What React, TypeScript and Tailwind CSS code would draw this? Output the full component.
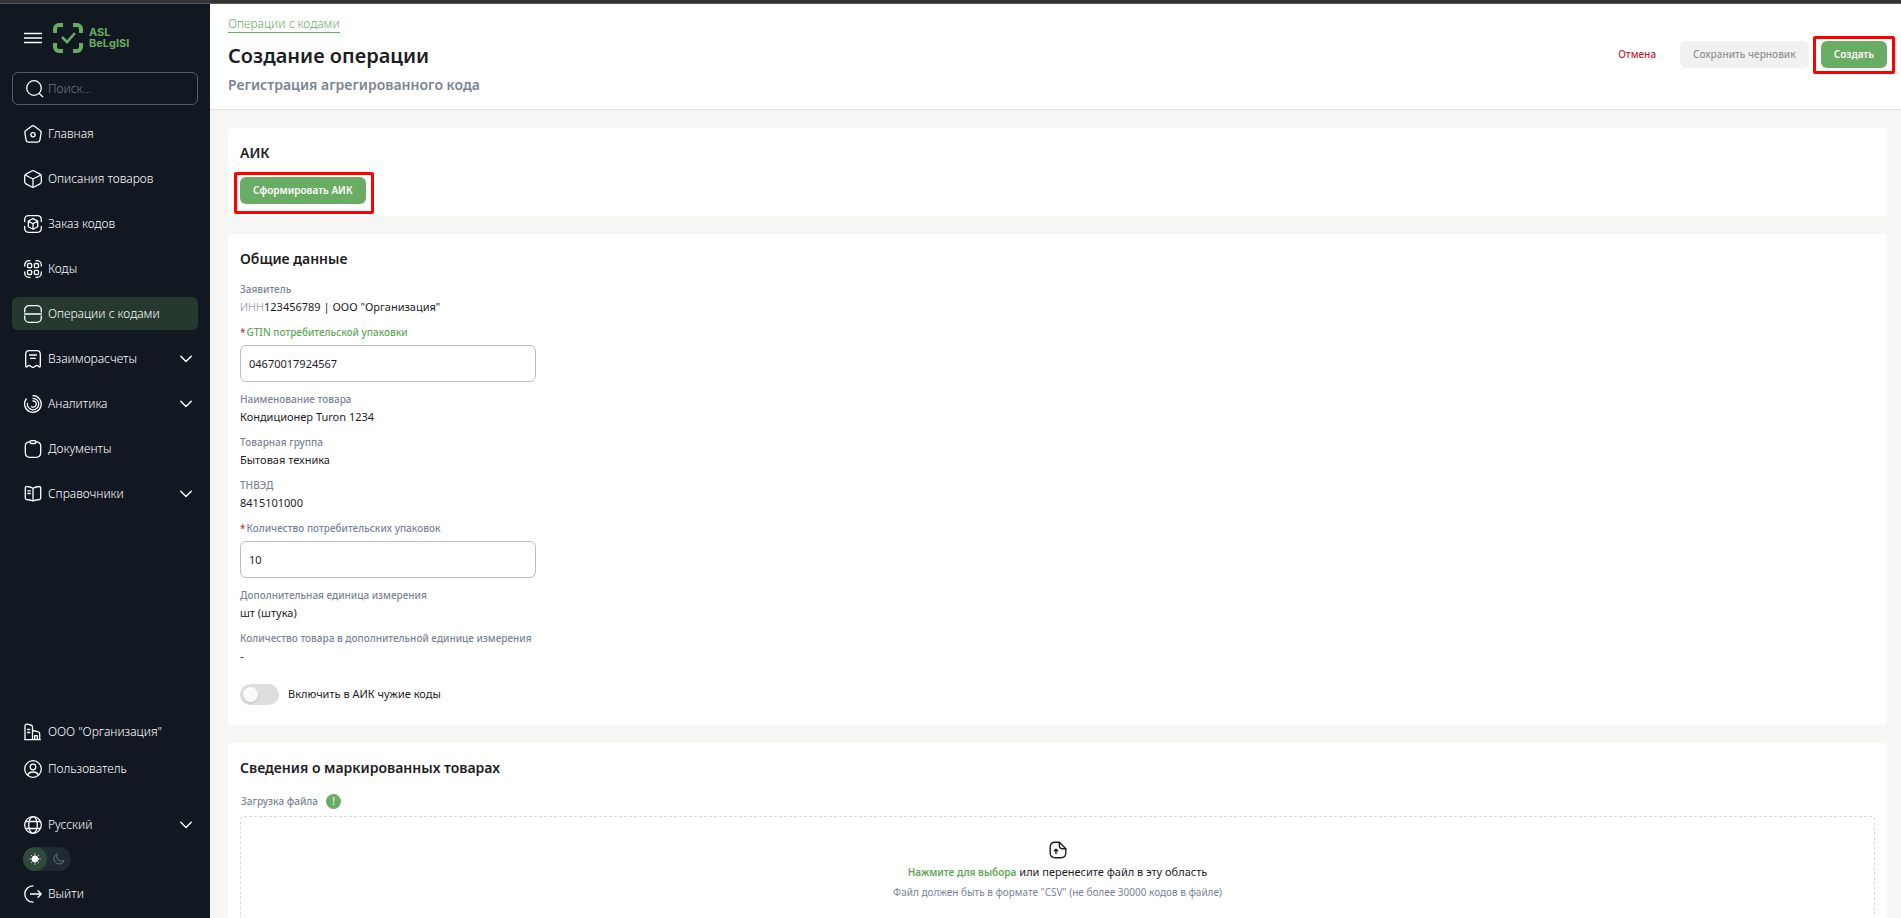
import React, { useState } from "react";

type NavItem = {
  label: string;
  icon: React.ReactNode;
  expandable?: boolean;
  active?: boolean;
};

const Icon = ({ children }: { children: React.ReactNode }) => (
  <svg
    viewBox="0 0 18 18"
    className="size-[18px] shrink-0"
    fill="none"
    stroke="currentColor"
    strokeWidth="1.3"
    strokeLinecap="round"
    strokeLinejoin="round"
    aria-hidden="true"
  >
    {children}
  </svg>
);

const ChevronIcon = () => (
  <svg viewBox="0 0 12 8" className="h-2 w-3 shrink-0" fill="none" stroke="currentColor" strokeWidth="1.4" strokeLinecap="round" strokeLinejoin="round">
    <path d="M.8 1.2 6 6.4l5.2-5.2" />
  </svg>
);

const navItems: NavItem[] = [
  {
    label: "Главная",
    icon: (
      <>
        <path d="M7.6 1.2 1.9 5.5c-.8.6-1.2 1.4-1 2.4l1.2 7.3c.2 1.2 1 1.9 2.2 1.9h9.4c1.2 0 2-.7 2.2-1.9l1.2-7.3c.2-1-.2-1.8-1-2.4l-5.7-4.3c-.9-.7-1.9-.7-2.8 0Z" />
        <circle cx="9" cy="9.7" r="2.1" />
      </>
    ),
  },
  {
    label: "Описания товаров",
    icon: (
      <>
        <path d="M7.8 1 2 4.1C1.1 4.6.7 5.3.7 6.3v5.4c0 1 .4 1.7 1.3 2.2L7.8 17c.8.4 1.6.4 2.4 0l5.8-3.1c.9-.5 1.3-1.2 1.3-2.2V6.3c0-1-.4-1.7-1.3-2.2L10.2 1c-.8-.4-1.6-.4-2.4 0Z" />
        <path d="M1.2 5 9 9l7.800-4M9 9v8.2" />
      </>
    ),
  },
  {
    label: "Заказ кодов",
    icon: (
      <>
        <path d="M.7 6.5V4.7c0-2.5 1.5-4 4-4h8.600c2.5 0 4 1.5 4 4v1.8M.7 11.5v1.8c0 2.5 1.5 4 4 4h8.600c2.5 0 4-1.5 4-4v-1.8" />
        <path d="M9 3.6 13.7 6v5.8L9 14.3l-4.7-2.5V6L9 3.6ZM4.5 6.2 9 8.7l4.5-2.5M9 8.7v5.4" />
      </>
    ),
  },
  {
    label: "Коды",
    icon: (
      <>
        <path d="M.7 6V5A4.3 4.3 0 0 1 5 .7h1M12 .7h1A4.3 4.3 0 0 1 17.3 5v1M17.3 12v1a4.3 4.3 0 0 1-4.3 4.3h-1M6 17.3H5A4.3 4.3 0 0 1 .7 13v-1" />
        <rect x="3.5" y="3.5" width="4.2" height="4.2" rx="1.2" />
        <rect x="10.3" y="3.5" width="4.2" height="4.2" rx="1.2" />
        <rect x="3.5" y="10.3" width="4.2" height="4.2" rx="1.2" />
        <rect x="10.3" y="10.3" width="4.2" height="4.2" rx="1.2" />
      </>
    ),
  },
  {
    label: "Операции с кодами",
    active: true,
    icon: (
      <path d="M.7 7V5A4.3 4.3 0 0 1 5 .7h8A4.3 4.3 0 0 1 17.3 5v2M.7 11v2A4.3 4.3 0 0 0 5 17.3h8a4.3 4.3 0 0 0 4.3-4.3v-2M.7 9h16.6" />
    ),
  },
  {
    label: "Взаиморасчеты",
    expandable: true,
    icon: (
      <>
        <path d="M1.7 16.2V4.5C1.7 2.2 2.9.7 5.2.7h7.6c2.3 0 3.5 1.5 3.5 3.8v11.7c0 .8-.7 1.1-1.3.6l-1.5-1.2c-.4-.3-.9-.3-1.2 0L9.7 17.2c-.4.4-1 .4-1.4 0l-2.6-1.6c-.4-.3-.8-.3-1.2 0L3 16.8c-.6.5-1.3.2-1.3-.6Z" />
        <path d="M5.5 5h7M6.5 8.3h5" />
      </>
    ),
  },
  {
    label: "Аналитика",
    expandable: true,
    icon: (
      <>
        <path d="M9 .7A8.3 8.3 0 1 1 2.3 4" />
        <path d="M9 3.4a5.7 5.7 0 1 1-5.6 5" />
        <path d="M9 6a3.1 3.1 0 1 1-1.5 5.7" />
      </>
    ),
  },
  {
    label: "Документы",
    icon: (
      <>
        <path d="M6 1.8H5.2C2.6 2.2 1.3 3.4 1.3 6v6.5c0 3.2 1.4 4.8 4.6 4.8h6.2c3.2 0 4.6-1.6 4.6-4.8V6c0-2.6-1.3-3.8-3.9-4.2H12" />
        <rect x="6" y=".7" width="6" height="2.8" rx="1.4" />
      </>
    ),
  },
  {
    label: "Справочники",
    expandable: true,
    icon: (
      <>
        <path d="M9 3.3v12.5M9 3.3C7.2 2.2 5 1.6 2.7 1.5c-.8 0-1.4.6-1.4 1.4v10.2c0 .8.5 1.3 1.3 1.4 2.2.1 4.4.6 6.4 1.5 2-.9 4.2-1.4 6.4-1.5.8-.1 1.3-.6 1.3-1.4V2.9c0-.8-.6-1.4-1.4-1.4-2.3.1-4.5.7-6.3 1.8Z" />
        <path d="M3.8 5.8h2.6M3.8 8.5h2.6" />
      </>
    ),
  },
];

const accountItems: NavItem[] = [
  {
    label: 'ООО "Организация"',
    icon: (
      <path d="M1 16.7V3c0-1.5.8-2.2 2.2-1.9l3.6.9c1.1.3 1.7 1 1.7 2.1v12.6M.7 16.7h15.6M8.5 7.5l5.2 1.2c1.3.3 2 1 2 2.2v5.8M3.5 6.5h2.3M3.5 9.5h2.3M10.7 16.5v-3.8h2.6v3.8" />
    ),
  },
  {
    label: "Пользователь",
    icon: (
      <>
        <circle cx="9" cy="9" r="8.3" />
        <circle cx="9" cy="7" r="2.8" />
        <path d="M3.8 15c.5-1.9 2.5-3 5.2-3s4.7 1.1 5.2 3" />
      </>
    ),
  },
];

const languageItem: NavItem = {
  label: "Русский",
  expandable: true,
  icon: (
    <>
      <circle cx="9" cy="9" r="8.3" />
      <ellipse cx="9" cy="9" rx="4.3" ry="8.3" />
      <path d="M1.7 5.5h14.6M1.7 12.5h14.6" />
    </>
  ),
};

const logoutItem: NavItem = {
  label: "Выйти",
  icon: <path d="M9 .8a8.2 8.2 0 1 0 0 16.4M6.5 9h10.7M14 5.8 17.2 9 14 12.2" />,
};

const NavButton = ({ item }: { item: NavItem }) => (
  <button
    type="button"
    className={`flex h-[33px] w-full items-center gap-1.5 rounded-md px-3 text-left ${
      item.active ? "bg-[#25392f]" : ""
    }`}
  >
    <Icon>{item.icon}</Icon>
    <span className="flex-1">{item.label}</span>
    {item.expandable && (
      <span className="-mr-1.5">
        <ChevronIcon />
      </span>
    )}
  </button>
);

const Logo = () => (
  <div className="flex items-center gap-1.5 text-[#67ad5f]">
    <svg viewBox="0 0 30 30" className="size-[30px]" fill="none" stroke="currentColor" aria-hidden="true">
      <path
        d="M10 2H6a4 4 0 0 0-4 4v4M20 2h4a4 4 0 0 1 4 4v4M28 20v4a4 4 0 0 1-4 4h-4M10 28H6a4 4 0 0 1-4-4v-4"
        strokeWidth="4"
      />
      <path d="m9 14 5 5 8-9" strokeWidth="2.6" />
    </svg>
    <div className="font-[Inter,sans-serif] text-[11px] leading-[11px] font-bold">
      <div>ASL</div>
      <div>BeLgISI</div>
    </div>
  </div>
);

const Sidebar = () => {
  const [dark, setDark] = useState(false);

  return (
    <aside className="flex w-[210px] shrink-0 flex-col bg-[#111822] px-3 pt-[19px] pb-2 text-xs font-[350] text-white">
      <div className="flex items-center gap-[11px] pl-3">
        <button type="button" aria-label="Меню">
          <svg viewBox="0 0 18 12" className="h-3 w-[18px]" stroke="currentColor" strokeWidth="1.3">
            <path d="M0 1.5h18M0 6h18M0 10.5h18" />
          </svg>
        </button>
        <Logo />
      </div>

      {/* Search */}
      <label className="mt-[19px] flex h-[33px] items-center gap-1 rounded-md border border-[#466372] pl-[13px]">
        <Icon>
          <circle cx="8" cy="8" r="7.3" />
          <path d="m13.5 13.8 3.2 3" />
        </Icon>
        <input
          aria-label="Поиск"
          placeholder="Поиск..."
          className="min-w-0 flex-1 bg-transparent outline-none placeholder:text-[#7a7d83]"
        />
      </label>

      <nav className="mt-3 flex flex-col gap-3">
        {navItems.map((item) => (
          <NavButton key={item.label} item={item} />
        ))}
      </nav>

      <div className="mt-auto flex flex-col gap-1">
        {accountItems.map((item) => (
          <NavButton key={item.label} item={item} />
        ))}
      </div>

      <div className="mt-[23px] flex flex-col gap-1.5">
        <NavButton item={languageItem} />

        {/* Theme switch */}
        <button
          type="button"
          aria-label="Тема"
          onClick={() => setDark(!dark)}
          className={`ml-[11px] flex w-12 rounded-full bg-[#1e2934] ${dark ? "flex-row-reverse" : ""}`}
        >
          <span className="flex size-6 items-center justify-center rounded-full bg-[#2f4a3b]">
            <svg viewBox="0 0 12 12" className="size-3" fill="#fff" stroke="#fff" strokeWidth="1" strokeLinecap="round">
              <circle cx="6" cy="6" r="3.1" />
              <path d="M6 .8v.4M6 10.8v.4M.8 6h.4M10.8 6h.4M2.3 2.3l.2.2M9.5 9.5l.2.2M2.3 9.7l.2-.2M9.5 2.5l.2-.2" />
            </svg>
          </span>
          <span className="flex size-6 items-center justify-center">
            <svg viewBox="0 0 12 12" className="size-3" fill="none" stroke="#65717c" strokeWidth="1" strokeLinejoin="round">
              <path d="M4.2.8a5.3 5.3 0 1 0 7 6.8A5.1 5.1 0 0 1 4.2.8Z" />
            </svg>
          </span>
        </button>

        <NavButton item={logoutItem} />
      </div>
    </aside>
  );
};

const Card = ({ title, children }: { title: string; children: React.ReactNode }) => (
  <section className="rounded-sm bg-white p-3">
    <h2 className="text-sm leading-[26px] font-semibold">{title}</h2>
    {children}
  </section>
);

const Field = ({ label, children }: { label: string; children: React.ReactNode }) => (
  <div>
    <p className="text-[10px] leading-[18px] font-medium text-[#7c8494]">{label}</p>
    <p className="text-[11px] leading-[18px]">{children}</p>
  </div>
);

const InputField = ({ id, label, value, green }: { id: string; label: string; value: string; green?: boolean }) => (
  <div className="flex flex-col gap-1 pb-px">
    <label
      htmlFor={id}
      className={`text-[10px] leading-[18px] font-medium ${green ? "text-[#5fa857]" : "text-[#7c8494]"}`}
    >
      <span className="mr-px text-[#c8324b]">*</span>
      {label}
    </label>
    <input
      id={id}
      defaultValue={value}
      className="h-[37px] w-[296px] rounded-md border border-[#bfbfbf] px-2 text-[11px] outline-none"
    />
  </div>
);

const greenButton = "block h-[27px] rounded-md bg-[#69ac63] px-[13px] text-[10px] font-semibold text-white";

export default function App() {
  const [foreign, setForeign] = useState(false);

  return (
    <div className="flex h-screen flex-col overflow-hidden bg-[#f6f6f4] font-['Noto_Sans',sans-serif] text-[#1d1d1f]">
      <div className="h-1 shrink-0 border-b border-[#5a5a5a] bg-[#333333]" />

      <div className="flex min-h-0 flex-1">
        <Sidebar />

        <main className="min-w-0 flex-1 overflow-hidden">
          {/* Header */}
          <header className="flex justify-between border-b border-[#dedfe0] bg-white pt-3 pr-3.5 pb-3 pl-[18px]">
            <div className="flex flex-col items-start">
              <a href="#" className="border-b border-[#67ad5f] text-xs leading-4 font-light text-[#67ad5f]">
                Операции с кодами
              </a>
              <h1 className="mt-[7px] text-xl leading-8 font-semibold">Создание операции</h1>
              <p className="mt-px text-sm leading-6 font-semibold text-[#7c8494]">Регистрация агрегированного кода</p>
            </div>

            <div className="flex items-start gap-3 pt-[25px]">
              <button type="button" className="h-[27px] px-3 text-[10px] font-medium text-[#c8242b]">
                Отмена
              </button>
              <button
                type="button"
                disabled
                className="h-[27px] rounded-md bg-[#f1f1f1] px-[13px] text-[10px] font-medium text-[#8f9194]"
              >
                Сохранить черновик
              </button>
              <div className="relative">
                <button type="button" className={greenButton}>
                  Создать
                </button>
                <div className="pointer-events-none absolute -inset-x-2 -top-[5px] -bottom-1.5 rounded-xs border-3 border-[#ff0000]" />
              </div>
            </div>
          </header>

          <div className="flex flex-col gap-[18px] pt-[18px] pr-3.5 pl-[18px]">
            <Card title="АИК">
              <div className="relative mt-[11px] w-fit">
                <button type="button" className={greenButton}>
                  Сформировать АИК
                </button>
                <div className="pointer-events-none absolute -top-[5px] -right-2 -bottom-2.5 -left-1.5 rounded-xs border-3 border-[#ff0000]" />
              </div>
            </Card>

            <Card title="Общие данные">
              <div className="mt-2 flex flex-col gap-[7px]">
                <Field label="Заявитель">
                  <span className="font-light text-[#7c8494]">ИНН</span>123456789 | ООО "Организация"
                </Field>
                <InputField id="gtin" label="GTIN потребительской упаковки" value="04670017924567" green />
                <Field label="Наименование товара">Кондиционер Turon 1234</Field>
                <Field label="Товарная группа">Бытовая техника</Field>
                <Field label="ТНВЭД">8415101000</Field>
                <InputField id="count" label="Количество потребительских упаковок" value="10" />
                <Field label="Дополнительная единица измерения">шт (штука)</Field>
                <Field label="Количество товара в дополнительной единице измерения">-</Field>
              </div>

              <label className="relative mt-[19px] mb-2 flex w-fit items-center gap-[9px] text-[11px]">
                <input
                  type="checkbox"
                  role="switch"
                  checked={foreign}
                  onChange={(e) => setForeign(e.target.checked)}
                  className="peer sr-only"
                />
                <span className="flex h-[21px] w-[39px] items-center rounded-full bg-[#dedede] px-[3px] peer-checked:justify-end peer-checked:bg-[#69ac63]">
                  <span className="size-[15px] rounded-full bg-[#fafafa] shadow-sm" />
                </span>
                Включить в АИК чужие коды
              </label>
            </Card>

            <Card title="Сведения о маркированных товарах">
              <div className="mt-2 flex h-6 items-center gap-2">
                <span className="pl-px text-[10px] font-medium text-[#7c8494]">Загрузка файла</span>
                <span className="flex size-[15px] items-center justify-center rounded-full bg-[#69ac63] text-[10px] text-white">
                  !
                </span>
              </div>

              {/* Drop zone */}
              <div className="mt-[3px] flex flex-col items-center rounded-sm border border-dashed border-[#dcdcdc] pt-6 pb-8">
                <svg viewBox="0 0 18 18" className="size-[18px]" fill="none" stroke="currentColor" strokeWidth="1.4" strokeLinecap="round" strokeLinejoin="round">
                  <path d="M10.3 1.2H6.2c-3.2 0-5 1.8-5 5v5.6c0 3.2 1.8 5 5 5h5.6c3.2 0 5-1.8 5-5V7.7L10.3 1.2Z" />
                  <path d="M10.3 1.2v3c0 2.3 1.2 3.5 3.5 3.5h3M7 12.5v-4M5.3 9.8 7 8.2l1.7 1.6" />
                </svg>
                <p className="mt-[3px] text-[11px] leading-5">
                  <button type="button" className="text-[10px] font-semibold text-[#5fa857]">
                    Нажмите для выбора
                  </button>{" "}
                  или перенесите файл в эту область
                </p>
                <p className="text-[10px] leading-5 text-[#7c8494]">
                  Файл должен быть в формате "CSV" (не более 30000 кодов в файле)
                </p>
              </div>
            </Card>
          </div>
        </main>
      </div>
    </div>
  );
}
